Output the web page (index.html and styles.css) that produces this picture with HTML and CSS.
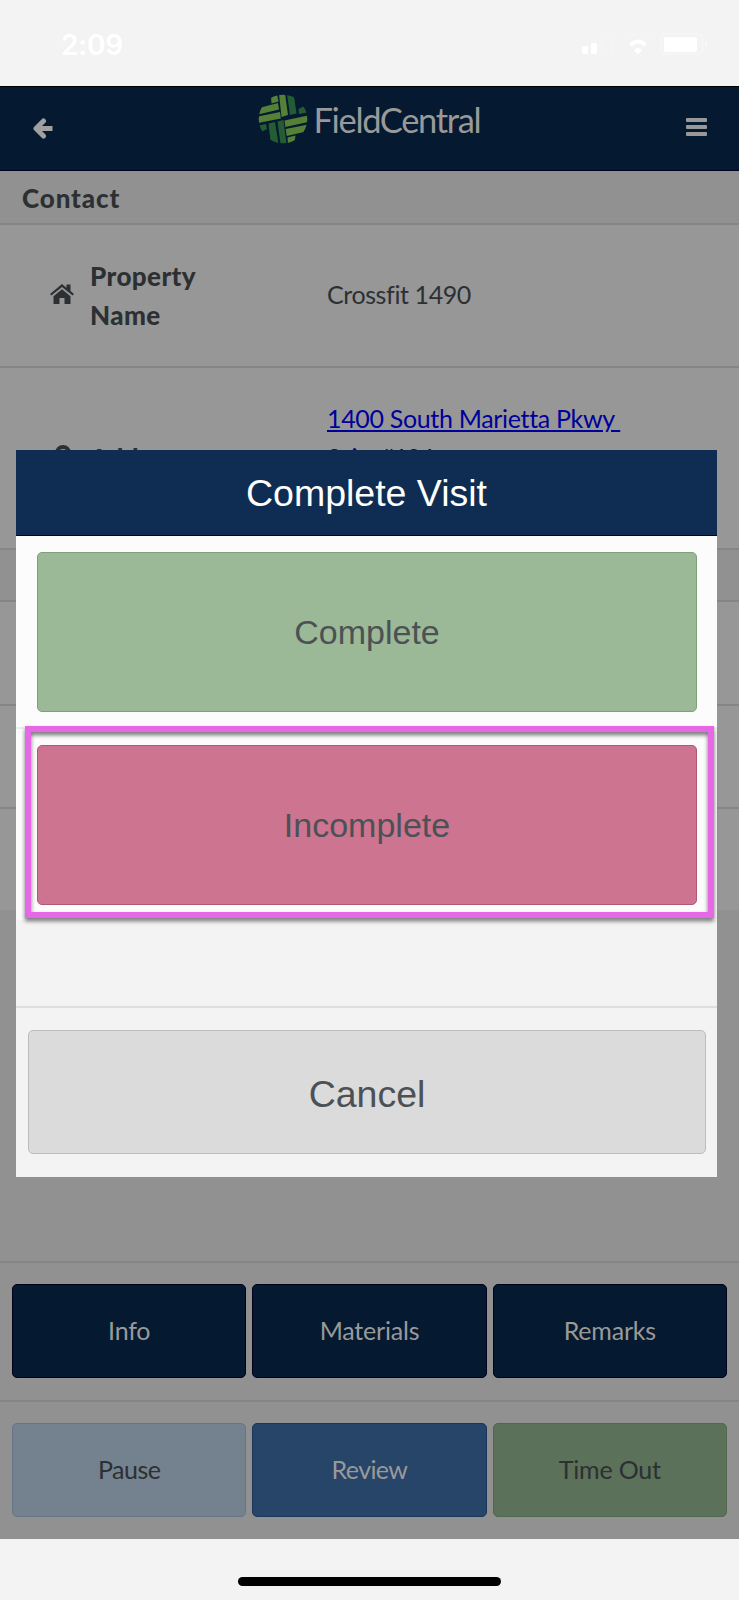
FILE: index.html
```html
<!DOCTYPE html>
<html lang="en">
<head>
<meta charset="utf-8">
<title>FieldCentral</title>
<link rel="stylesheet" href="styles.css">
</head>
<body>
<div class="phone">
  <div class="status">
    <span class="time">2:09</span>
    <svg class="indicators" width="128" height="24" viewBox="0 0 128 24" fill="#fff">
      <rect x="1" y="13" width="6" height="8" rx="1.5"/><rect x="10" y="10" width="6" height="11" rx="1.5"/>
      <g opacity=".15"><rect x="19" y="5" width="6" height="16" rx="1.5"/><rect x="28" y="1" width="6" height="20" rx="1.5"/></g>
      <path d="M45 6Q57-3 69 6" fill="none" stroke="#fff" stroke-width="4" opacity=".15"/>
      <path d="M49.500 12Q57 5 64.500 12" fill="none" stroke="#fff" stroke-width="4"/>
      <path d="M53 17q4-4 8 0l-4 4.500z"/>
      <rect x="80" y="1" width="42" height="20" rx="5" fill="none" stroke="#fff" stroke-width="2" opacity=".3"/>
      <rect x="83" y="4" width="33" height="15" rx="2"/><path d="M124 7q5 4 0 8z" opacity=".4"/>
    </svg>
  </div>
  <header class="topbar">
    <svg class="back" width="20" height="22" viewBox="0 0 20 22" fill="none" stroke="#a0a0a0" stroke-width="5" stroke-linecap="round" stroke-linejoin="round"><path d="M10.500 3L3 10.500l7.500 7.500"/><path d="M4 10.500h15.500" stroke-linecap="butt"/></svg>
    <div class="brand">
      <svg width="50" height="50" viewBox="0 0 50 50">
        <clipPath id="disc"><circle cx="25" cy="25" r="24.300"/></clipPath>
        <g clip-path="url(#disc)">
          <g fill="#548137">
            <path d="M13 3l6-3 1.500 7.500-7 2z"/>
            <path d="M21 0l6-.5 3 21.500-6.500 2z"/>
            <path d="M1 14l19-5 1 6.500-21 5z"/>
            <path d="M0 22.500l22-4.500.8 6.500L0 29z"/>
            <path d="M26.500 26.500L50 21.500v6.500l-22.700 5z"/>
            <path d="M27.700 35L50 30.500l-2 7-19.300 4.500z"/>
            <path d="M29.500 43.500l8-2-1 7-6.500 2z"/>
          </g>
          <g fill="#245d34">
            <path d="M29 0l7 2.500 2.500 17-6.500 1.500z"/>
            <path d="M40.500 15l5-2.500 4 6-8.500 1.500z"/>
            <path d="M1 31.500l7-1.500 1 5-5 2.500z"/>
            <path d="M10.500 29.500l6.500-1.500 3.500 22-8-3z"/>
            <path d="M19.500 27.500l6-1.500 3 24h-6z"/>
          </g>
        </g>
      </svg>
      <span class="wordmark">FieldCentral</span>
    </div>
    <div class="menu"><i></i><i></i><i></i></div>
  </header>
  <main class="details">
    <h2 class="section">Contact</h2>
    <div class="row property">
      <svg class="home" width="24" height="20" viewBox="0 0 24 20" fill="#2c3033"><path d="M12 0L0 10l1.400 1.600L12 3l10.600 8.600L24 10l-3.500-3V.5h-4v3.200z"/><path d="M3.500 12.200L12 5.200l8.500 7V20h-6v-6h-5v6h-6z"/></svg>
      <span class="label">Property Name</span>
      <span class="value">Crossfit 1490</span>
    </div>
    <div class="row address">
      <svg class="pin" width="16" height="24" viewBox="0 0 16 24" fill="#2c3033" fill-rule="evenodd"><path d="M8 0a8 8 0 0 1 8 8c0 4-5 11-8 16C5 19 0 12 0 8a8 8 0 0 1 8-8zM8 4a4 4 0 1 0 0 8 4 4 0 0 0 0-8z"/></svg>
      <span class="label">Address</span>
      <a class="value link"><span>1400 South Marietta Pkwy&nbsp;</span><br><span class="suite">Suite #104</span></a>
    </div>
    <div class="strip"></div>
    <div class="row blank"></div>
    <div class="row blank"></div>
    <div class="row blank last"></div>
  </main>
  <footer class="actions">
    <div class="group"><button class="navy">Info</button><button class="navy">Materials</button><button class="navy">Remarks</button></div>
    <div class="group"><button class="pale">Pause</button><button class="blue">Review</button><button class="sage">Time Out</button></div>
  </footer>
  <div class="homebar"><i></i></div>

  <section class="modal">
    <h1 class="title">Complete Visit</h1>
    <div class="choice"><button class="complete">Complete</button></div>
    <div class="choice second"><button class="incomplete">Incomplete</button></div>
    <div class="dismiss"><button class="cancel">Cancel</button></div>
    <div class="highlight"></div>
  </section>
</div>
</body>
</html>
```
FILE: styles.css
```css
* { box-sizing: border-box; }
body { margin: 0; background: #f3f3f3; font-family: Lato, sans-serif; }
button { display: block; margin: 0; padding: 0; font: inherit; border: 1px solid; border-radius: 5px; }
h1, h2 { margin: 0; font-weight: 400; }
.phone { position: relative; width: 739px; height: 1600px; display: flex; flex-direction: column; overflow: hidden; background: #f3f3f3; }

.status { height: 86px; flex: none; display: flex; justify-content: space-between; align-items: flex-start; padding: 33px 30px 0 61px; color: #fff; }
.time { font: 600 28px/24px Inter, sans-serif; letter-spacing: -.2px; }
.indicators { display: block; }

.topbar { height: 85px; flex: none; display: flex; justify-content: space-between; padding: 0 32px 0 33px; background: #051a30; border-top: 1px solid #000; border-bottom: 1px solid #000020; }
.back { margin-top: 31px; }
.brand { display: flex; margin-left: 12px; padding-top: 7px; }
.wordmark { width: 180px; margin-left: 6px; font-size: 34.5px; line-height: 51px; letter-spacing: -1.35px; color: #999; }
.menu { display: flex; flex-direction: column; gap: 3px; padding-top: 31px; }
.menu i { width: 21px; height: 4px; border-radius: 1px; background: #999; }

.details { flex: none; height: 1090px; background: #919191; }
.section { height: 54px; padding-left: 22px; border-bottom: 2px solid #858585; font-size: 26px; font-weight: 900; line-height: 55px; letter-spacing: .9px; color: #2c3033; }
.row { display: flex; align-items: center; border-bottom: 2px solid #868686; background: #979797; color: #2c3033; }
.property { height: 143px; padding-left: 50px; }
.home { margin-top: -4px; }
.label { width: 130px; margin-left: 16px; font-size: 26px; font-weight: 900; line-height: 39px; letter-spacing: .4px; }
.value { margin-left: 107px; font-size: 25px; line-height: 39px; white-space: nowrap; letter-spacing: -.4px; }
.property .value { margin-top: -3px; }
.address { height: 182px; padding-left: 55px; align-items: flex-start; padding-top: 31px; }
.pin { margin-top: 46px; }
.address .label { margin: 40px 0 0 19px; }
.link { text-decoration: underline; color: #00009a; letter-spacing: -.33px; }
.suite { letter-spacing: -1.4px; }
.strip { height: 52px; border-bottom: 2px solid #858585; }
.blank { height: 103.500px; }
.last { height: 101px; border-bottom: 0; }

.actions { flex: none; height: 278px; background: #919191; }
.group { height: 139px; display: grid; grid-template-columns: repeat(3, 1fr); gap: 6px; padding: 21px 12px; border-top: 2px solid #858585; font-size: 25px; }
.group button { height: 94px; padding-bottom: 2px; }
.group .navy { background: #051a30; border-color: #000018; color: #999; letter-spacing: -.2px; }
.group .pale { background: #74818e; border-color: #667484; color: #2c3033; letter-spacing: -.5px; }
.group .blue { background: #274469; border-color: #1b365b; color: #999; letter-spacing: -.6px; }
.group .sage { background: #5b7159; border-color: #4f684e; color: #2c3033; letter-spacing: -.2px; }
.homebar { flex: 1; padding-top: 38px; }
.homebar i { display: block; width: 263px; height: 9px; margin: 0 auto; border-radius: 5px; background: #000; }

.modal { position: absolute; left: 16px; top: 450px; width: 701px; height: 727px; background: #f3f3f3; font-family: "Liberation Sans", Arial, sans-serif; }
.title { height: 86px; border-bottom: 1px solid #000040; background: #0f2d52; color: #fff; font-size: 37.5px; line-height: 87px; text-align: center; }
.choice { height: 193px; padding: 16px 20px 0 21px; border-bottom: 2px solid #ededed; background: #fcfcfc; }
.second { height: 191px; border-bottom: 0; }
.choice button { width: 100%; height: 160px; color: #4b5155; font-size: 34px; }
.choice .complete { background: #9bb996; border-color: #7da27b; }
.choice .incomplete { background: #cd7490; border-color: #b25776; }
.dismiss { margin-top: 86px; padding: 22px 11px 0 12px; border-top: 2px solid #dedede; }
.cancel { width: 100%; height: 124px; padding-top: 4px; border-color: #bdbdbd; background: #dbdbdb; color: #4b5155; font-size: 37.5px; }
.highlight { position: absolute; left: 9px; top: 276px; width: 689px; height: 192px; border: 6px solid #e668e6; filter: drop-shadow(0 3px 2px rgba(0, 0, 0, .55)); }
```
